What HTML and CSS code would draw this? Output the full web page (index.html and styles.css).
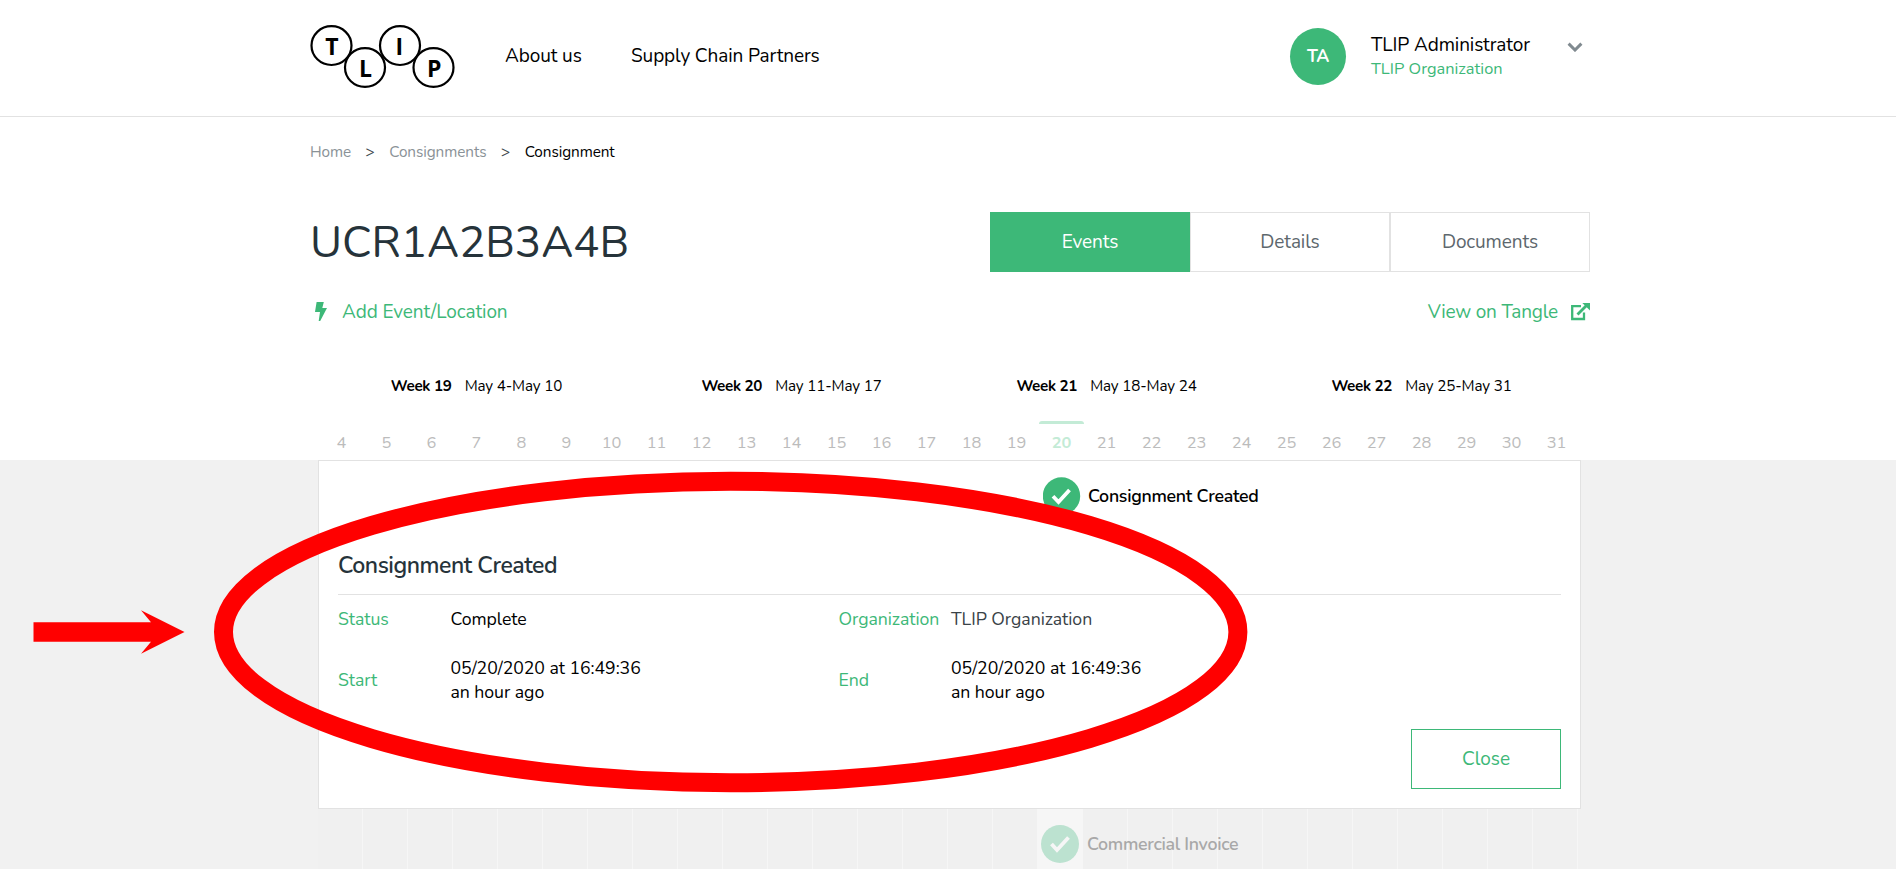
FILE: index.html
```html
<!DOCTYPE html>
<html lang="en">
<head>
<meta charset="utf-8">
<title>TLIP – Consignment UCR1A2B3A4B</title>
<link rel="stylesheet" href="styles.css">
</head>
<body>
<header class="header">
  <div class="wrap header-row">
    <svg class="logo" width="146" height="66" viewBox="0 0 146 66" aria-label="TLIP">
      <g fill="none" stroke="#000" stroke-width="2.2">
        <ellipse cx="21.5" cy="21.6" rx="20" ry="19.4"/><ellipse cx="55" cy="43.5" rx="20" ry="19.4"/>
        <ellipse cx="90" cy="21.6" rx="20" ry="19.4"/><ellipse cx="123.5" cy="43.5" rx="20" ry="19.4"/>
      </g>
      <g class="logo-text">
        <text x="21.8" y="31">T</text><text x="55.5" y="52.8">L</text><text x="89.2" y="31">I</text><text x="124.2" y="52.8">P</text>
      </g>
    </svg>
    <nav class="nav"><a class="nav-about">About us</a><a>Supply Chain Partners</a></nav>
    <div class="user">
      <div class="avatar">TA</div>
      <div class="user-text"><div>TLIP Administrator</div><div class="user-org">TLIP Organization</div></div>
      <svg class="chevron" width="16" height="10" viewBox="0 0 16 10"><path d="M1.6 1.6L8 8L14.4 1.6" fill="none" stroke="#808a90" stroke-width="3"/></svg>
    </div>
  </div>
</header>

<main>
  <div class="wrap">
    <div class="crumbs"><a>Home</a><i>&gt;</i><a>Consignments</a><i>&gt;</i><b>Consignment</b></div>
    <div class="title-row">
      <h1 class="title">UCR1A2B3A4B</h1>
      <div class="tabs"><a class="tab tab-active">Events</a><a class="tab">Details</a><a class="tab">Documents</a></div>
    </div>
    <div class="actions">
      <a class="action-add"><svg width="12" height="19" viewBox="0 0 12 19"><path d="M1.6 0H8.8L7.3 6H12L5.2 19H3.7L5 10H0z" fill="#3db878"/></svg><span>Add Event/Location</span></a>
      <a class="action-view"><span>View on Tangle</span><svg width="20" height="18" viewBox="0 0 20 18"><path d="M11 3.2H2.2V16H14V9.5" fill="none" stroke="#3db878" stroke-width="2.3"/><path d="M7.5 11.5L16.5 2.5" fill="none" stroke="#3db878" stroke-width="2.8"/><path d="M12.3 0H20V7.5z" fill="#3db878"/></svg></a>
    </div>
    <div class="weeks">
      <div><b>Week 19</b><span>May 4-May 10</span></div>
      <div><b>Week 20</b><span>May 11-May 17</span></div>
      <div><b>Week 21</b><span>May 18-May 24</span></div>
      <div><b>Week 22</b><span>May 25-May 31</span></div>
    </div>
    <div class="days">
      <span>4</span><span>5</span><span>6</span><span>7</span><span>8</span><span>9</span><span>10</span><span>11</span><span>12</span><span>13</span><span>14</span><span>15</span><span>16</span><span>17</span><span>18</span><span>19</span><span class="today">20</span><span>21</span><span>22</span><span>23</span><span>24</span><span>25</span><span>26</span><span>27</span><span>28</span><span>29</span><span>30</span><span>31</span>
    </div>
  </div>

  <section class="timeline">
    <div class="panel">
      <div class="event">
        <svg width="38" height="38" viewBox="0 0 38 38"><circle cx="18.5" cy="19" r="18.7" fill="#3db878"/><path d="M10 19.3L15.5 25L26.5 13" fill="none" stroke="#fff" stroke-width="3.8"/></svg>
        <span>Consignment Created</span>
      </div>
      <h2 class="panel-title">Consignment Created</h2>
      <dl class="details">
        <dt>Status</dt><dd>Complete</dd><dt>Organization</dt><dd class="dd-org">TLIP Organization</dd>
        <dt>Start</dt><dd><div>05/20/2020 at 16:49:36</div><div>an hour ago</div></dd>
        <dt>End</dt><dd><div>05/20/2020 at 16:49:36</div><div>an hour ago</div></dd>
      </dl>
      <div class="panel-foot"><button class="close">Close</button></div>
    </div>
    <div class="grid">
      <div class="grid-today"></div>
      <div class="invoice">
        <svg width="38" height="38" viewBox="0 0 38 38"><circle cx="19" cy="19" r="19" fill="#bce2d0"/><path d="M10.5 19L16 25L27.5 12.5" fill="none" stroke="#f6f6f6" stroke-width="3.8"/></svg>
        <span>Commercial Invoice</span>
      </div>
    </div>
  </section>
</main>

<svg class="markup" width="1896" height="869" viewBox="0 0 1896 869">
  <ellipse cx="730.7" cy="632" rx="507.2" ry="150.7" fill="none" stroke="#f00" stroke-width="19"/>
  <path d="M33.5 622.3H151L141 610.3L184.5 632L141 653.7L151 641.7H33.5z" fill="#f00"/>
</svg>
</body>
</html>
```
FILE: styles.css
```css
* { box-sizing: border-box; }
html, body { height: 100%; margin: 0; overflow: hidden; }
body { background: #fff; color: #000; font-family: Nunito, Lato, sans-serif; font-size: 19px; font-weight: 400; line-height: 24px; letter-spacing: -.1px; white-space: nowrap; }
.wrap { width: 1280px; margin-left: 310px; }

.header { height: 117px; border-bottom: 1px solid #e2e2e2; }
.header-row { display: flex; height: 112px; align-items: center; }
.logo { margin-top: 2px; }
.logo-text { font: 700 23px "Open Sans", sans-serif; text-anchor: middle; }
.nav { display: flex; gap: 50px; margin-left: 49px; }
.nav-about { width: 76px; }
.user { display: flex; align-items: center; margin: 1px 0 0 auto; width: 300px; }
.avatar { width: 56px; height: 57px; border-radius: 50%; background: #3db878; color: #fff; font-size: 17.5px; font-weight: 700; line-height: 57px; letter-spacing: -.3px; text-align: center; }
.user-text { margin-left: 25px; width: 197px; }
.user-org { color: #3db878; font-size: 16.4px; letter-spacing: 0; }
.chevron { margin: -19px 0 0 -1px; }

.crumbs { display: flex; height: 95px; padding-top: 23px; color: #8a9297; font-size: 15.3px; letter-spacing: -.07px; }
.crumbs i { margin: 0 14.5px; color: #40484d; font-style: normal; }
.crumbs b { color: #000; font-weight: 400; }
.title-row { display: flex; justify-content: space-between; height: 60px; }
.title { margin: 0; font-size: 44px; font-weight: 400; line-height: 62px; letter-spacing: -.12px; color: #26333a; }
.tabs { display: flex; width: 600px; }
.tab { flex: 1; border: 1px solid #e2e2e2; color: #5d676d; line-height: 59px; text-align: center; }
.tab-active { border-color: #3db878; background: #3db878; color: #fff; }

.actions { display: flex; justify-content: space-between; height: 101px; padding-top: 27px; color: #3db878; }
.actions a { display: flex; height: 25px; align-items: center; }
.action-add { gap: 15px; padding-left: 5px; }
.action-view { gap: 12px; letter-spacing: -.18px; }

.weeks { display: flex; width: 1260px; height: 48px; margin-left: 9px; padding-top: 1px; font-size: 15.2px; letter-spacing: -.14px; }
.weeks div { display: flex; width: 315px; gap: 13px; justify-content: center; }
.weeks b { font-weight: 700; letter-spacing: -.3px; }
.days { display: flex; width: 1260px; height: 39px; margin-left: 9px; color: #bcbcbc; font-size: 16.4px; letter-spacing: 0; }
.days span { width: 45px; padding-top: 7px; border-top: 3px solid transparent; text-align: center; }
.days .today { border-top-color: #c3ebd6; border-radius: 3px 3px 0 0; color: #c3ebd6; font-weight: 700; }

.timeline { height: 409px; padding-left: 318px; background: #f1f1f1; }
.panel { width: 1263px; height: 349px; padding: 16px 19px 19px; border: 1px solid #e2e2e2; background: #fff; }
.event { display: flex; gap: 7px; height: 38px; align-items: center; padding-left: 705px; font-size: 17.8px; font-weight: 600; letter-spacing: -.28px; }
.panel-title { height: 43px; margin: 37px 0 0; border-bottom: 1px solid #e2e2e2; color: #26333a; font-size: 23px; font-weight: 600; line-height: 28px; letter-spacing: -.44px; }
.details { display: grid; grid-template-columns: 112.5px 388px 112.5px 1fr; grid-template-rows: 48px 74px; align-items: center; margin: 0; font-size: 17.7px; letter-spacing: -.05px; }
.details dt { color: #3db878; }
.details dd { margin: 0; }
.details .dd-org { color: #3a4247; }
.panel-foot { display: flex; justify-content: flex-end; margin-top: 12px; }
.close { width: 150px; height: 60px; border: 1px solid #3db878; background: #fff; color: #3db878; font: inherit; }

.grid { display: flex; width: 1260px; height: 60px; background: repeating-linear-gradient(90deg, #f0f0f0 0 44px, #f6f6f6 44px 45px); }
.grid-today { width: 45px; margin-left: 720px; background: #f6f6f6; }
.invoice { display: flex; gap: 8px; height: 38px; margin: 16px 0 0 -42px; align-items: center; color: #a8a8a8; font-size: 17.8px; font-weight: 600; letter-spacing: -.3px; }

/* Red callout drawn over the page */
.markup { position: absolute; top: 0; left: 0; pointer-events: none; }
```
